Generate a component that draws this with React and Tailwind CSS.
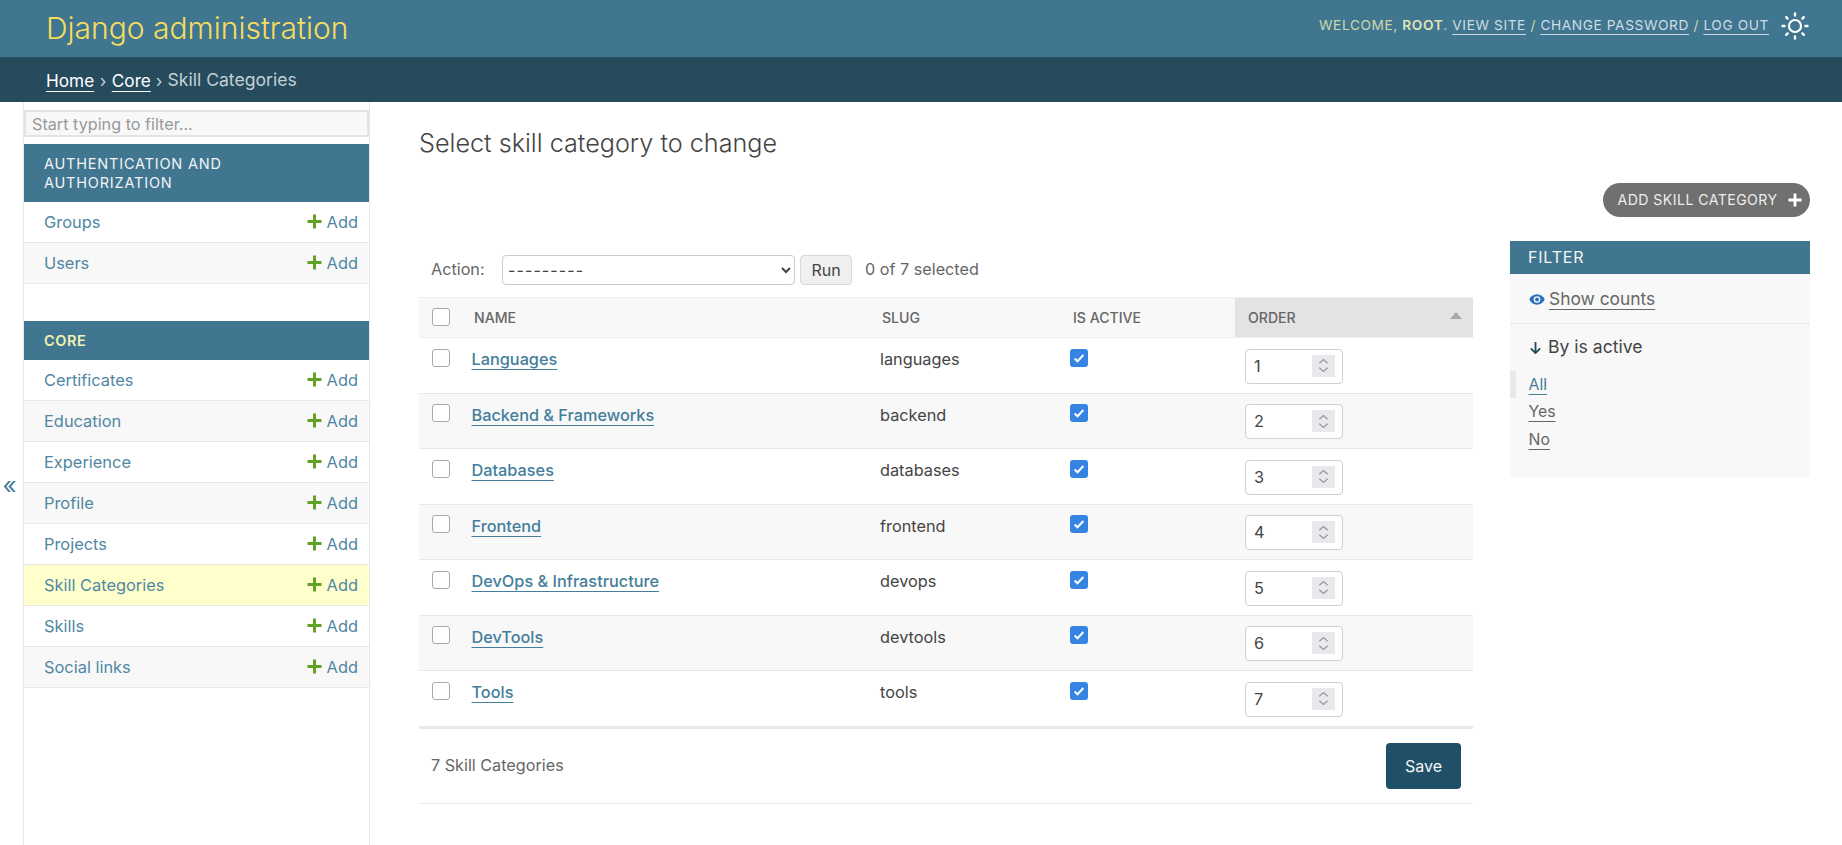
import React from "react";

const Plus = ({ className = "" }) => (
  <svg viewBox="0 0 16 16" className={className} aria-hidden="true">
    <path d="M8 0.5v15M0.5 8h15" stroke="currentColor" strokeWidth="3.2" fill="none" />
  </svg>
);

const Sun = () => (
  <svg viewBox="0 0 28 28" className="w-[28px] h-[28px] text-white" aria-hidden="true">
    <circle cx="14" cy="14" r="6" fill="none" stroke="currentColor" strokeWidth="2.2" />
    <g stroke="currentColor" strokeWidth="2.4" strokeLinecap="round">
      <path d="M14 1.5v2M14 24.5v2M1.5 14h2M24.5 14h2M5.2 5.2l1.4 1.4M21.4 21.4l1.4 1.4M5.2 22.8l1.4-1.4M21.4 6.6l1.4-1.4" />
    </g>
  </svg>
);

const SideRow = ({ label, alt, active }) => (
  <div
    className={`flex items-center justify-between h-[41px] pl-[20px] pr-[11px] border-b border-[#e8e8e8] text-[16.4px] ${
      active ? "bg-[#ffffcc]" : alt ? "bg-[#f8f8f8]" : "bg-white"
    }`}
  >
    <span className="text-[#4f87a3]">{label}</span>
    <span className="flex items-center gap-[5px] text-[#4f87a3]">
      <Plus className="w-[15px] h-[15px] text-[#5fa225]" />
      Add
    </span>
  </div>
);

const rows = [
  ["Languages", "languages"],
  ["Backend & Frameworks", "backend"],
  ["Databases", "databases"],
  ["Frontend", "frontend"],
  ["DevOps & Infrastructure", "devops"],
  ["DevTools", "devtools"],
  ["Tools", "tools"],
];

const core = ["Certificates", "Education", "Experience", "Profile", "Projects", "Skill Categories", "Skills", "Social links"];

const Box = () => (
  <div className="w-[18px] h-[18px] rounded-[3px] border border-[#a9a9b4] bg-white" />
);

const Checked = () => (
  <div className="w-[18px] h-[18px] rounded-[3px] bg-[#3584e4] flex items-center justify-center">
    <svg viewBox="0 0 16 16" className="w-[14px] h-[14px]" aria-hidden="true">
      <path d="M3 8.5l3.3 3.2L13 4.6" stroke="#fff" strokeWidth="2.3" fill="none" />
    </svg>
  </div>
);

const Spin = ({ value }) => (
  <div className="relative w-[98px] h-[35px] rounded-[4px] border border-[#d0d0d0] bg-white flex items-center pl-[8px] text-[16.3px] text-[#444]">
    {value}
    <div className="absolute right-[7px] top-[5px] w-[23px] h-[22px] bg-[#e9e9ed] flex items-center justify-center">
      <svg viewBox="0 0 14 18" className="w-[13px] h-[17px]" aria-hidden="true">
        <path d="M2.5 6.5L7 2.5l4.5 4M2.5 11.5l4.5 4 4.5-4" stroke="#96969f" strokeWidth="1.3" fill="none" />
      </svg>
    </div>
  </div>
);

const userLink = "text-[#cfdce4] underline decoration-1 underline-offset-[4px]";

export default function App() {
  return (
    <div className="h-[845px] overflow-hidden bg-white text-[#444] font-[family-name:Inter,sans-serif]">
      <header className="h-[57px] bg-[#417690] flex items-center justify-between pl-[46px] pr-[33px]">
        <h1 className="text-[30px] font-light text-[#f5dd5d] pb-[1px]">Django administration</h1>
        <div className="flex items-center gap-[12px] pb-[6px] text-[13.7px] uppercase tracking-[0.6px] text-[#cdd8ae]">
          <div>
            WELCOME, <strong className="font-semibold text-[#e0e4b6]">root</strong>.{" "}
            <a className={userLink}>View site</a> /{" "}
            <a className={userLink}>Change password</a> /{" "}
            <a className={userLink}>Log out</a>
          </div>
          <Sun />
        </div>
      </header>
      <nav className="h-[45px] bg-[#264b5d] flex items-center pl-[46px] pt-[2px] text-[17.2px] text-[#c4d0d6]">
        <a className="text-white underline underline-offset-[4px]">Home</a>
        <span className="mx-[5.5px]">›</span>
        <a className="text-white underline underline-offset-[4px]">Core</a>
        <span className="mx-[5px]">›</span>
        <span className="text-[17.6px]">Skill Categories</span>
      </nav>

      <div className="flex h-[743px]">
        <div className="w-[23px] flex items-center justify-center text-[#447e9b] text-[24px] leading-none pr-[4px] pt-[24px]">
          «
        </div>
        <aside className="w-[347px] border-x border-[#e8e8e8] pt-[8px]">
          <input
            readOnly
            placeholder="Start typing to filter..."
            className="block w-full h-[27px] bg-[#f8f8f8] border-2 border-[#e3e3e3] px-[6px] text-[16.2px] placeholder:text-[#999]"
          />
          <div className="mt-[7px] bg-[#417690] h-[58px] pl-[20px] pr-[40px] pt-[10px] text-[14.5px] leading-[19px] tracking-[0.8px] text-[#f0f4f6] uppercase">
            Authentication and Authorization
          </div>
          <SideRow label="Groups" />
          <SideRow label="Users" alt />
          <div className="mt-[37px] bg-[#417690] h-[39px] pl-[20px] flex items-center text-[14.5px] font-semibold tracking-[0.6px] text-[#f2f0b0] uppercase">
            Core
          </div>
          {core.map((c, i) => (
            <SideRow key={c} label={c} alt={i % 2 === 1} active={c === "Skill Categories"} />
          ))}
        </aside>

        <main className="flex-1 pl-[49px] pr-[32px] min-w-0">
          <h2 className="mt-[26px] text-[25.2px] font-light text-[#444] leading-[30px]">Select skill category to change</h2>
          <div className="flex justify-end mt-[25px]">
            <a className="h-[34px] w-[207px] rounded-full bg-[#707070] flex items-center whitespace-nowrap pl-[14.5px] gap-[10px] text-[14.1px] uppercase tracking-[0.45px] text-[#ededed]">
              Add skill category
              <Plus className="w-[14px] h-[14px] text-white" />
            </a>
          </div>

          <div className="flex gap-[37px] mt-[23px] items-start">
            <section className="w-[1054px]">
              <div className="flex items-center h-[57px] pl-[12px] pt-[2px] text-[16.2px] text-[#666]">
                <span className="w-[71px]">Action:</span>
                <select className="w-[293px] h-[30px] rounded-[4px] border border-[#cccccc] bg-white pl-[1px] pr-[5px] text-[16px] text-[#444] tracking-[1.1px]">
                  <option>---------</option>
                </select>
                <button className="ml-[5px] w-[52px] h-[30px] rounded-[4px] border border-[#d8d8d8] bg-[#f0f0f0] text-[16px] text-[#444]">
                  Run
                </button>
                <span className="ml-[13px]">0 of 7 selected</span>
              </div>
              <div className="grid grid-cols-[41px_408px_190px_177px_238px] h-[41px] bg-[#f8f8f8] border-y border-[#eeeeee] text-[14.1px] font-medium text-[#666] uppercase">
                <div className="pl-[12.5px] pt-[10px]"><Box /></div>
                <div className="pl-[14px] flex items-center">Name</div>
                <div className="pl-[14px] flex items-center">Slug</div>
                <div className="pl-[15px] flex items-center">Is active</div>
                <div className="relative pl-[13px] flex items-center bg-[#e3e3e3]">
                  Order
                  <svg viewBox="0 0 12 7" className="absolute right-[11px] top-[14px] w-[12px] h-[7px]" aria-hidden="true">
                    <path d="M6 0l6 7H0z" fill="#a8a8a8" />
                  </svg>
                </div>
              </div>
              {rows.map(([n, s], i) => (
                <div
                  key={s}
                  className={`grid grid-cols-[41px_408px_190px_177px_238px] h-[55.5px] border-b border-[#e8e8e8] text-[16.3px] ${
                    i % 2 ? "bg-[#f8f8f8]" : "bg-white"
                  }`}
                >
                  <div className="pl-[12.5px] pt-[10.5px]"><Box /></div>
                  <div className="pl-[11.5px] pt-[9px] leading-[24px]">
                    <a className="text-[#447e9b] font-medium underline underline-offset-[4px]">{n}</a>
                  </div>
                  <div className="pl-[12px] pt-[9px] leading-[24px]">{s}</div>
                  <div className="pl-[12px] pt-[10.5px]"><Checked /></div>
                  <div className="pl-[10px] pt-[10.5px]"><Spin value={i + 1} /></div>
                </div>
              ))}
              <div className="flex items-center justify-between h-[77px] border-t-2 border-b border-t-[#e8e8e8] border-b-[#e8e8e8] pl-[12px] pr-[12px] text-[16.2px] text-[#666]">
                <span>7 Skill Categories</span>
                <button className="w-[75px] h-[46px] rounded-[4px] bg-[#205067] text-[16px] text-[#f2f5f7]">Save</button>
              </div>
            </section>

            <aside className="w-[300px] h-[236px] mt-[1px] bg-[#f8f8f8]">
              <div className="h-[33px] bg-[#417690] pl-[18px] pb-[1px] flex items-center text-[16px] tracking-[0.8px] text-[#f2f5f7] uppercase">
                Filter
              </div>
              <div className="h-[50px] pl-[19px] pt-[2px] flex items-center gap-[4px] border-b border-[#e8e8e8] text-[#666] text-[17.4px]">
                <svg viewBox="0 0 16 12" className="w-[16px] h-[13px]" aria-hidden="true">
                  <path d="M8 0.8C4.5 0.8 1.6 3 0.3 6c1.3 3 4.2 5.2 7.7 5.2s6.4-2.2 7.7-5.2C14.4 3 11.5.8 8 .8z" fill="#2c70c0" />
                  <circle cx="8" cy="6" r="3.3" fill="#f8f8f8" />
                  <circle cx="8" cy="6" r="1.9" fill="#2c70c0" />
                </svg>
                <a className="underline underline-offset-[4px]">Show counts</a>
              </div>
              <div className="h-[46px] pl-[19px] flex items-center gap-[6px] text-[17.6px] text-[#444]">
                <svg viewBox="0 0 14 14" className="w-[13px] h-[13px]" aria-hidden="true">
                  <path d="M7 1v12M2 8l5 5 5-5" stroke="#264b5d" strokeWidth="2" fill="none" />
                </svg>
                By is active
              </div>
              <ul className="relative mt-[1px] text-[15.8px] leading-[27.4px] pl-[18.5px] text-[#666]">
                <li className="relative">
                  <span className="absolute left-[-18.5px] top-0 w-[6px] h-[27px] bg-[#e8e8e8]" />
                  <a className="text-[#447e9b] underline underline-offset-[4px]">All</a>
                </li>
                <li><a className="underline underline-offset-[4px]">Yes</a></li>
                <li><a className="underline underline-offset-[4px]">No</a></li>
              </ul>
            </aside>
          </div>
        </main>
      </div>
    </div>
  );
}
